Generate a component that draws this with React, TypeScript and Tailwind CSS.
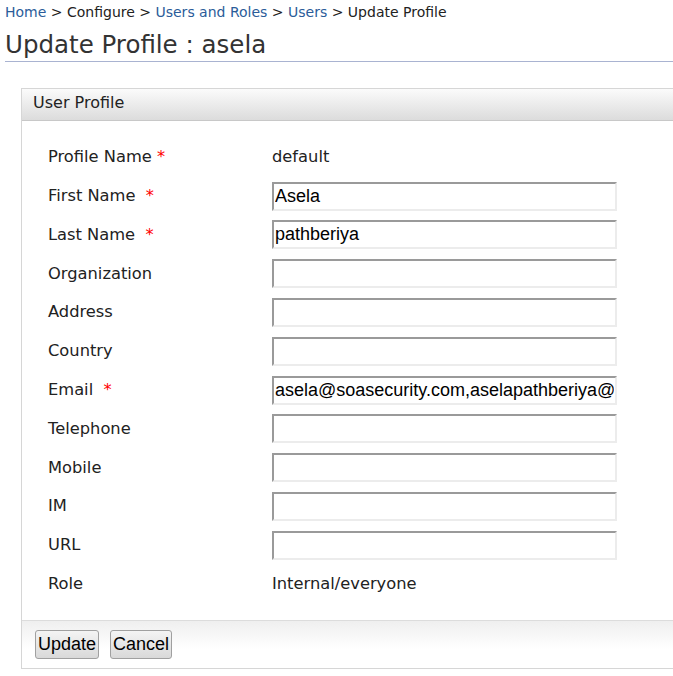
const rows: { label: string; req?: boolean; gap?: boolean; value?: string; input?: boolean }[] = [
  { label: "Profile Name", req: true, value: "default" },
  { label: "First Name", req: true, gap: true, input: true, value: "Asela" },
  { label: "Last Name", req: true, gap: true, input: true, value: "pathberiya" },
  { label: "Organization", input: true },
  { label: "Address", input: true },
  { label: "Country", input: true },
  { label: "Email", req: true, gap: true, input: true, value: "asela@soasecurity.com,aselapathberiya@gmail.com" },
  { label: "Telephone", input: true },
  { label: "Mobile", input: true },
  { label: "IM", input: true },
  { label: "URL", input: true },
  { label: "Role", value: "Internal/everyone" },
];

export default function App() {
  return (
    <div className="w-[673px] h-[676px] overflow-hidden bg-white font-['DejaVu_Sans',sans-serif] text-[#222]">
      {/* BREADCRUMB */}
      <div className="px-[5px] pt-[3px] text-[14px] leading-[18px] whitespace-nowrap">
        <span className="text-[#2b5c99]">Home</span> &gt; Configure &gt;{" "}
        <span className="text-[#2b5c99]">Users and Roles</span> &gt;{" "}
        <span className="text-[#2b5c99]">Users</span> &gt; Update Profile
      </div>

      {/* TITLE */}
      <div className="ml-[5px] mt-[10px] border-b border-[#a9b3d1] pb-[3px]">
        <h1 className="text-[24.5px] leading-[27px] text-[#333]">Update Profile : asela</h1>
      </div>

      {/* PANEL */}
      <div className="ml-[21px] mt-[26px] w-[680px] border border-[#d6d6d6]">
        <div className="h-[32px] pl-[11px] pt-[4px] leading-[20px] bg-gradient-to-b from-[#fbfbfb] to-[#dcdcdc] border-b border-[#c8c8c8] text-[16px]">
          User Profile
        </div>

        <div className="pl-[26px] pt-[17px] pb-[16px]">
          {rows.map((r) => (
            <div key={r.label} className="h-[38.8px] flex items-center">
              <div className="w-[224px] text-[16.3px] whitespace-pre">
                {r.label}
                {r.req && <span className="text-[#f00]">{r.gap ? "  *" : " *"}</span>}
              </div>
              {r.input ? (
                <input
                  readOnly
                  value={r.value ?? ""}
                  className="w-[345px] h-[29px] px-[1px] border-2 border-t-[#9a9a9a] border-l-[#9a9a9a] border-r-[#ececec] border-b-[#ececec] bg-white text-[18px] text-black font-['Liberation_Sans',sans-serif] outline-none"
                />
              ) : (
                <div className="text-[16.3px]">{r.value}</div>
              )}
            </div>
          ))}
        </div>

        {/* FOOTER */}
        <div className="h-[48px] flex items-center gap-[11px] pl-[13px] border-t border-[#dcdcdc] bg-gradient-to-b from-[#efefef] to-white to-60%">
          <button className="h-[29px] px-[2px] rounded-[3px] border border-[#a0a0a0] bg-gradient-to-b from-[#f4f4f4] to-[#d9d9d9] text-[18px] font-['Liberation_Sans',sans-serif] text-black">
            Update
          </button>
          <button className="h-[29px] px-[2px] rounded-[3px] border border-[#a0a0a0] bg-gradient-to-b from-[#f4f4f4] to-[#d9d9d9] text-[18px] font-['Liberation_Sans',sans-serif] text-black">
            Cancel
          </button>
        </div>
      </div>
    </div>
  );
}
